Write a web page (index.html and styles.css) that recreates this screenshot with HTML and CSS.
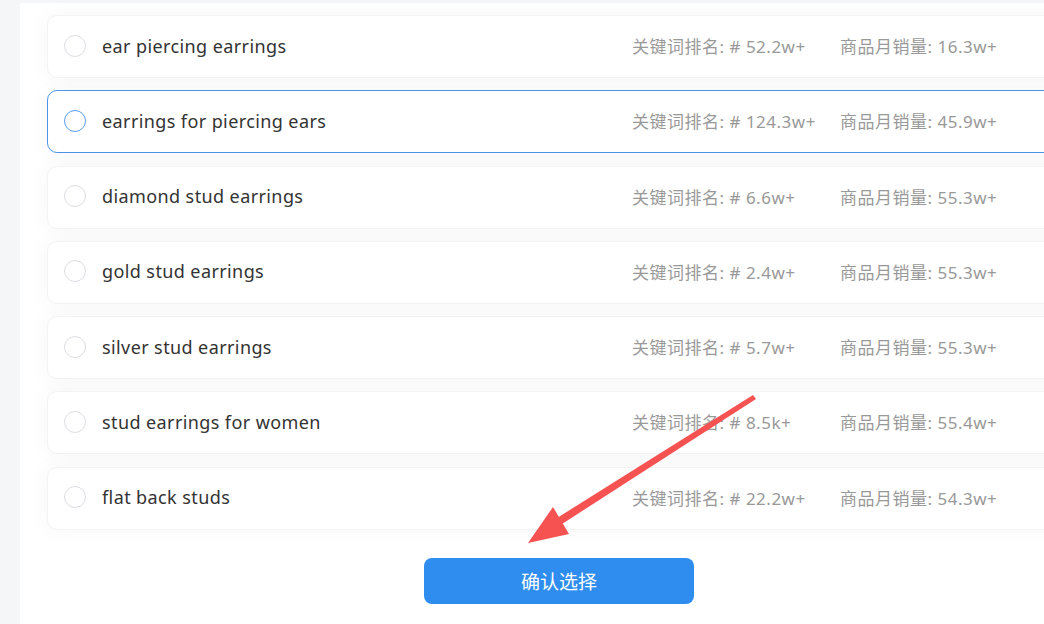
FILE: index.html
```html
<!DOCTYPE html>
<html lang="zh-CN">
<head>
  <meta charset="UTF-8">
  <meta name="viewport" content="width=device-width, initial-scale=1.0">
  <title>选择关键词</title>
  <link rel="stylesheet" href="styles.css">
</head>
<body>
  <div class="panel">
    <!-- 关键词列表 -->
    <div class="keyword-list">
      <div class="keyword-item">
        <span class="radio"></span>
        <span class="keyword-name">ear piercing earrings</span>
        <span class="keyword-rank">关键词排名: # 52.2w+</span>
        <span class="keyword-sales">商品月销量: 16.3w+</span>
      </div>
      <div class="keyword-item active">
        <span class="radio"></span>
        <span class="keyword-name">earrings for piercing ears</span>
        <span class="keyword-rank">关键词排名: # 124.3w+</span>
        <span class="keyword-sales">商品月销量: 45.9w+</span>
      </div>
      <div class="keyword-item">
        <span class="radio"></span>
        <span class="keyword-name">diamond stud earrings</span>
        <span class="keyword-rank">关键词排名: # 6.6w+</span>
        <span class="keyword-sales">商品月销量: 55.3w+</span>
      </div>
      <div class="keyword-item">
        <span class="radio"></span>
        <span class="keyword-name">gold stud earrings</span>
        <span class="keyword-rank">关键词排名: # 2.4w+</span>
        <span class="keyword-sales">商品月销量: 55.3w+</span>
      </div>
      <div class="keyword-item">
        <span class="radio"></span>
        <span class="keyword-name">silver stud earrings</span>
        <span class="keyword-rank">关键词排名: # 5.7w+</span>
        <span class="keyword-sales">商品月销量: 55.3w+</span>
      </div>
      <div class="keyword-item">
        <span class="radio"></span>
        <span class="keyword-name">stud earrings for women</span>
        <span class="keyword-rank">关键词排名: # 8.5k+</span>
        <span class="keyword-sales">商品月销量: 55.4w+</span>
      </div>
      <div class="keyword-item">
        <span class="radio"></span>
        <span class="keyword-name">flat back studs</span>
        <span class="keyword-rank">关键词排名: # 22.2w+</span>
        <span class="keyword-sales">商品月销量: 54.3w+</span>
      </div>
    </div>

    <!-- 确认按钮 -->
    <div class="footer">
      <button class="confirm-button">确认选择</button>
    </div>
  </div>

  <!-- 标注箭头 -->
  <svg class="pointer-arrow" width="1044" height="624" viewBox="0 0 1044 624">
    <polygon points="753,395 756,399 562,524 557,518" fill="#f65252"/>
    <polygon points="528,543 553,507 569,534" fill="#f65252"/>
  </svg>
</body>
</html>
```

FILE: styles.css
```css
body {
  margin: 0;
  background-color: #f5f6f8;
  font-family: 'Noto Sans', 'Noto Sans CJK SC', sans-serif;
  overflow: hidden;
  height: 624px;
}

.panel {
  width: 1078px;
  margin-left: 20px;
  margin-top: 3px;
  height: 621px;
  background-color: #fff;
}

.keyword-list {
  display: flex;
  flex-direction: column;
  gap: 12.3px;
  padding: 12px 27px 0 27px;
}

.keyword-item {
  display: flex;
  align-items: center;
  height: 63px;
  box-sizing: border-box;
  padding-left: 16px;
  padding-bottom: 2px;
  background-color: #fff;
  border: 1px solid #f3f3f3;
  border-radius: 10px;
  box-shadow: 0 0 24px rgba(0, 0, 0, 0.04);
}

.keyword-item.active {
  border-color: #4a95e8;
}

.radio {
  width: 22px;
  height: 22px;
  box-sizing: border-box;
  border: 1px solid #dcdee2;
  border-radius: 50%;
  margin-right: 16px;
  flex-shrink: 0;
}

.keyword-item.active .radio {
  border: 1.5px solid #5a9ef0;
}

.keyword-name {
  width: 530px;
  font-size: 18px;
  letter-spacing: 0.4px;
  color: #333;
}

.keyword-rank {
  width: 208px;
  font-size: 17px;
  letter-spacing: 0.5px;
  color: #999;
}

.keyword-sales {
  font-size: 17px;
  letter-spacing: 0.5px;
  color: #999;
}

.footer {
  display: flex;
  justify-content: center;
  padding-top: 28px;
}

.confirm-button {
  width: 270px;
  height: 46px;
  border: none;
  border-radius: 8px;
  background-color: #2e8dee;
  color: #fff;
  font-size: 19px;
  font-family: 'Noto Sans CJK SC', sans-serif;
  cursor: pointer;
}

/* 箭头覆盖层 */
.pointer-arrow {
  position: absolute;
  left: 0;
  top: 0;
  pointer-events: none;
}
```
